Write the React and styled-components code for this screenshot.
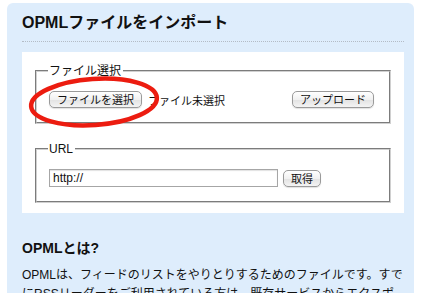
import styled, { createGlobalStyle } from 'styled-components';

const GlobalStyle = createGlobalStyle`
  html, body {
    margin: 0;
    padding: 0;
    background: #ffffff;
  }
  body {
    font-family: 'Liberation Sans', 'Noto Sans CJK JP', sans-serif;
    color: #111;
  }
`;

export default function App() {
  return (
    <>
      <GlobalStyle />
      <Page>
        <Panel>
          <Title>OPMLファイルをインポート</Title>
          <FormBox>
            <Fieldset>
              <Legend>ファイル選択</Legend>
              <Row>
                <Marked>
                  <AquaButton>ファイルを選択</AquaButton>
                  <Ellipse width="140" height="60" viewBox="0 0 140 60">
                    <ellipse
                      cx="70"
                      cy="30"
                      rx="63"
                      ry="23"
                      transform="rotate(-4 70 30)"
                      fill="none"
                      stroke="#ec1c10"
                      strokeWidth="4.5"
                    />
                  </Ellipse>
                </Marked>
                <FileStatus>ファイル未選択</FileStatus>
                <AquaButton $push>アップロード</AquaButton>
              </Row>
            </Fieldset>
            <Fieldset $gap>
              <Legend>URL</Legend>
              <Row>
                <UrlInput defaultValue="http://" />
                <AquaButton>取得</AquaButton>
              </Row>
            </Fieldset>
          </FormBox>
          <SubTitle>OPMLとは?</SubTitle>
          <Text>
            OPMLは、フィードのリストをやりとりするためのファイルです。すでにRSSリーダーをご利用されている方は、既存サービスからエクスポートしたOPMLファイルを読み込むことができます。
          </Text>
        </Panel>
      </Page>
    </>
  );
}

const Page = styled.div`
  padding: 3px 10px 0 7px;
  height: 293px;
  box-sizing: border-box;
  overflow: hidden;
`;

const Panel = styled.div`
  background: #deedfc;
  border-radius: 6px;
  padding: 8px 10px 20px 15px;
`;

const Title = styled.h1`
  margin: 0 0 10px;
  padding: 2px 0 8px;
  font-family: 'Liberation Sans', 'Noto Sans CJK JP', sans-serif;
  font-size: 16px;
  font-weight: bold;
  line-height: 20px;
  color: #111;
  border-bottom: 1px dotted #b4bcc6;
`;

const FormBox = styled.div`
  background: #ffffff;
  padding: 12px 13px 10px;
`;

const Fieldset = styled.fieldset`
  margin: ${({ $gap }) => ($gap ? '18px 0 0' : '0')};
  padding: 13px 12px 14px 12px;
  border: 2px groove #d0d0d0;
  min-width: 0;
`;

const Legend = styled.legend`
  padding: 0 2px 0 1px;
  margin-left: -1px;
  font-size: 12px;
  line-height: 14px;
  color: #111;
`;

const Row = styled.div`
  display: flex;
  align-items: center;
  gap: 5px;
`;

const Marked = styled.span`
  position: relative;
  display: inline-flex;
`;

const Ellipse = styled.svg`
  position: absolute;
  left: -25px;
  top: -19px;
  pointer-events: none;
`;

const AquaButton = styled.button`
  height: 17px;
  padding: 0 7px;
  margin-left: ${({ $push }) => ($push ? 'auto' : '0')};
  margin-right: ${({ $push }) => ($push ? '3px' : '0')};
  font-family: 'Noto Sans CJK JP', sans-serif;
  font-size: 11px;
  line-height: 15px;
  color: #111;
  background: linear-gradient(#ffffff, #f1f1f1 50%, #e2e2e2 51%, #f4f4f4);
  border: 1px solid #9a9a9a;
  border-radius: 5px;
  box-shadow: 0 1px 1px rgba(0, 0, 0, 0.12);
`;

const FileStatus = styled.span`
  margin-left: 1px;
  font-family: 'Noto Sans CJK JP', sans-serif;
  font-size: 11px;
  color: #111;
`;

const UrlInput = styled.input`
  width: 229px;
  height: 18px;
  box-sizing: border-box;
  padding: 0 3px;
  font-family: 'Liberation Sans', sans-serif;
  font-size: 12px;
  color: #111;
  border: 1px solid #a6a6a6;
  box-shadow: inset 0 1px 1px rgba(0, 0, 0, 0.12);
  outline: none;
`;

const SubTitle = styled.h2`
  margin: 26px 0 0;
  font-size: 14px;
  font-weight: bold;
  line-height: 18px;
  color: #111;
`;

const Text = styled.p`
  margin: 9px 0 0;
  font-family: 'Liberation Sans', 'Noto Sans CJK JP', sans-serif;
  font-size: 12px;
  line-height: 19px;
  color: #111;
`;
